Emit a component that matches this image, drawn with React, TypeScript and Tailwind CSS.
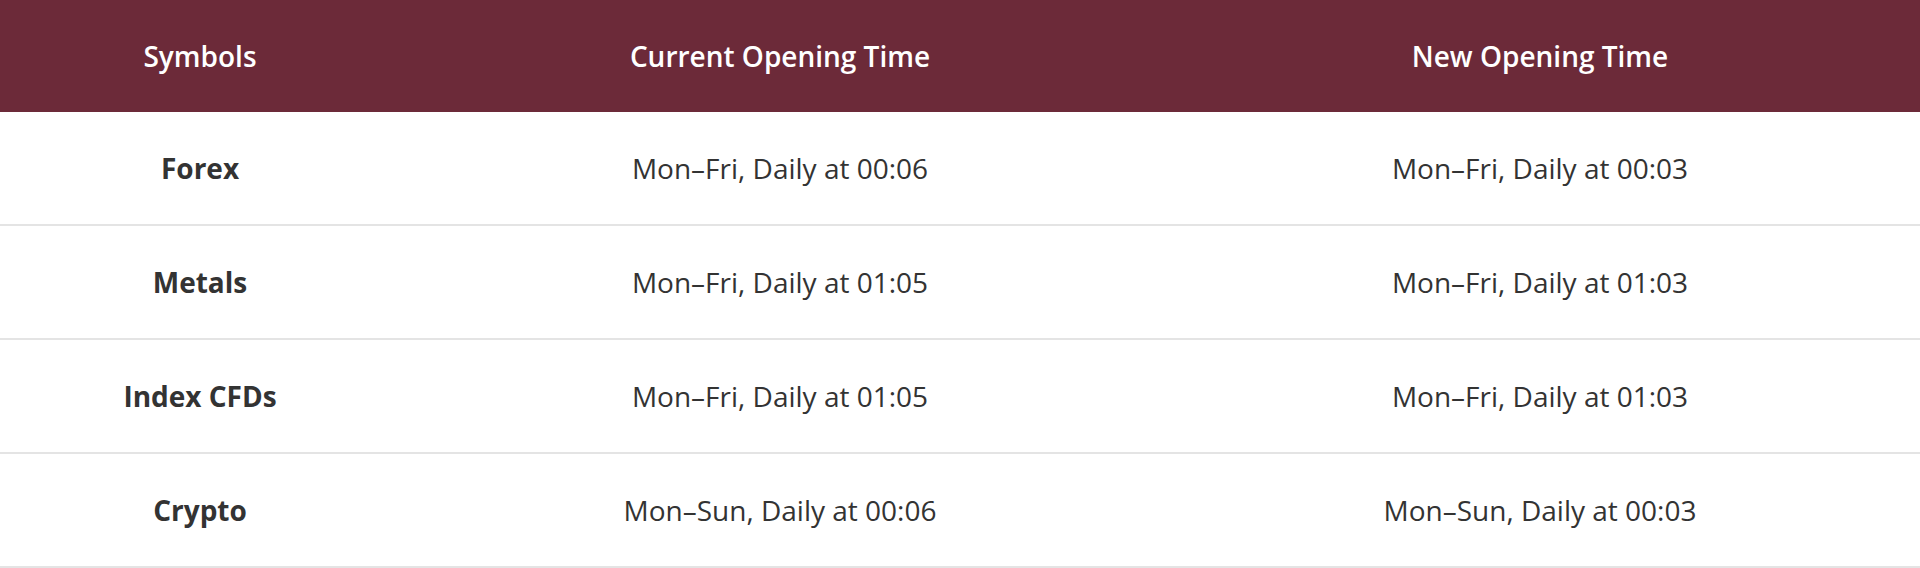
const rows = [
  { symbol: "Forex", current: "Mon–Fri, Daily at 00:06", next: "Mon–Fri, Daily at 00:03" },
  { symbol: "Metals", current: "Mon–Fri, Daily at 01:05", next: "Mon–Fri, Daily at 01:03" },
  { symbol: "Index CFDs", current: "Mon–Fri, Daily at 01:05", next: "Mon–Fri, Daily at 01:03" },
  { symbol: "Crypto", current: "Mon–Sun, Daily at 00:06", next: "Mon–Sun, Daily at 00:03" },
];

export default function App() {
  return (
    <div className="w-full bg-white font-['Open_Sans',sans-serif] text-[28px] text-[#333333]">
      <div className="grid h-[112px] grid-cols-[400px_760px_1fr] items-center bg-[#6c2a39] font-semibold text-white">
        <div className="text-center">Symbols</div>
        <div className="text-center">Current Opening Time</div>
        <div className="text-center">New Opening Time</div>
      </div>
      {rows.map((row) => (
        <div
          key={row.symbol}
          className="grid h-[114px] grid-cols-[400px_760px_1fr] items-center border-b-2 border-[#e4e4e4]"
        >
          <div className="text-center font-bold">{row.symbol}</div>
          <div className="text-center">{row.current}</div>
          <div className="text-center">{row.next}</div>
        </div>
      ))}
    </div>
  );
}
